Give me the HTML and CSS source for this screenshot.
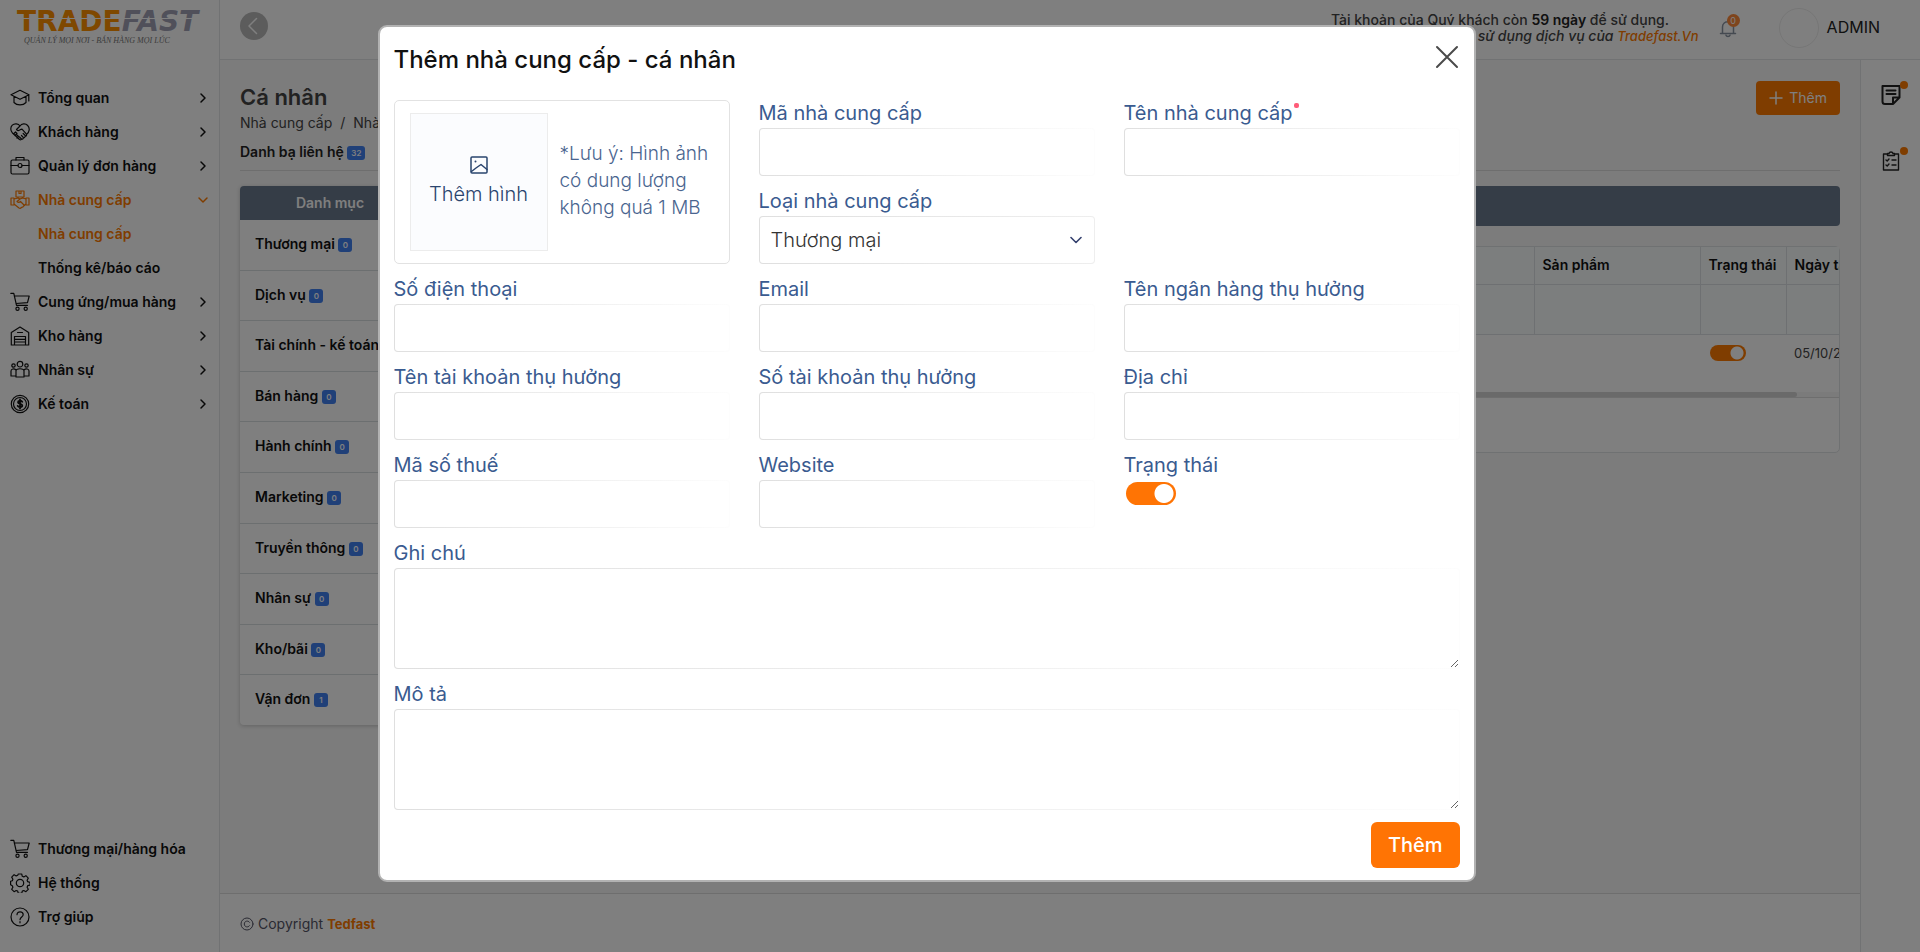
FILE: index.html
```html
<!DOCTYPE html>
<html lang="vi">
<head>
<meta charset="utf-8">
<title>Tradefast</title>
<link rel="stylesheet" href="styles.css">
</head>
<body>
<svg class="sprite" aria-hidden="true">
  <symbol id="chev" viewBox="0 0 12 12"><path d="M4 2 8 6 4 10"/></symbol>
  <symbol id="cart" viewBox="0 0 20 20"><path d="M.8 1.3h3l2.7 12h11M4.3 4h14.9l-1.700 6.700L6 11.500"/><circle cx="7.500" cy="16.800" r="1.600"/><circle cx="15.700" cy="16.800" r="1.600"/></symbol>
</svg>
<div class="app">
  <aside class="sidebar">
    <a class="logo" href="#"><span class="logo-word"><span class="logo-a">TRADE</span><span class="logo-b">FAST</span></span><span class="tagline">QUẢN LÝ MỌI NƠI - BÁN HÀNG MỌI LÚC</span></a>
    <nav class="menu">
      <a href="#"><svg class="ico" viewBox="0 0 20 20"><path d="M10 2.3 1 6.8l9 4.5 9-4.5zM4 8.5v6c3 3.2 9 3.2 12 0v-6M18.8 7v6"/></svg>Tổng quan<svg class="chev"><use href="#chev"/></svg></a>
      <a href="#"><svg class="ico" viewBox="0 0 20 20"><path d="M10 4C8.500 1.500 4.500 1 2.300 3.200 0 5.500.600 9 2.500 11l7 6.500c1 .7 1.700.2 2-.5 1 .3 1.800-.2 1.900-1.200 1 .1 1.700-.6 1.700-1.500 1 0 1.600-.8 1.400-1.700 3-2.600 3.700-6.400 1.200-9.100C15.500 1 11.500 1.500 10 4L6.500 7.500c.7 1.500 2.500 1.500 3.800.2l1.700-.5 4.500 5M11.500 13.500l2 2.200M9.500 15l2 2M13.200 11.500l2 2M3.500 12l2-2 1.500 1.500-2 2M7 13l1.500 1.500L7 16"/></svg>Khách hàng<svg class="chev"><use href="#chev"/></svg></a>
      <a href="#"><svg class="ico" viewBox="0 0 20 20"><rect x="1" y="4" width="18" height="14" rx="1.500"/><path d="M6 4V1.500h8V4M1 9.500h7M12 9.500h7"/><circle cx="10" cy="9.500" r="2"/></svg>Quản lý đơn hàng<svg class="chev"><use href="#chev"/></svg></a>
      <a class="active" href="#"><svg class="ico" viewBox="0 0 20 20"><path d="M6 1h8v6H6zM9 1v2.500h2V1M1 8h3v7H1zM16 8h3v7h-3zM4 9l4-1 2 1 2.500-1L16 9M4 14l5 4c1 .6 2 0 2.500-.7 1.500 0 2-.8 2.200-1.500L16 14M10 9l-3 2.500c1 1 2.500.8 3.500 0l4 4"/></svg>Nhà cung cấp<svg class="chev down"><use href="#chev"/></svg></a>
      <a class="sub active" href="#">Nhà cung cấp</a>
      <a class="sub" href="#">Thống kê/báo cáo</a>
      <a href="#"><svg class="ico"><use href="#cart"/></svg>Cung ứng/mua hàng<svg class="chev"><use href="#chev"/></svg></a>
      <a href="#"><svg class="ico" viewBox="0 0 20 20"><path d="M1.300 19V6.500L10 1l8.700 5.500V19h-3.200v-8.500h-11V19zM7.500 6.500h5M4.500 13.300h11M4.500 16h11M4.500 19h11"/></svg>Kho hàng<svg class="chev"><use href="#chev"/></svg></a>
      <a href="#"><svg class="ico" viewBox="0 0 20 20"><circle cx="10" cy="4.200" r="2.800"/><circle cx="3.500" cy="5.500" r="1.700"/><circle cx="16.500" cy="5.500" r="1.700"/><path d="M6 17v-6c0-3 8-3 8 0v6zM6 16H1v-5c0-2 3-3 5-1M14 16h5v-5c0-2-3-3-5-1"/></svg>Nhân sự<svg class="chev"><use href="#chev"/></svg></a>
      <a href="#"><svg class="ico" viewBox="0 0 20 20"><circle cx="10" cy="10" r="8.700"/><circle cx="10" cy="10" r="6.500"/><path class="bold" d="M12.300 7.800c-.8-1.500-4.300-1.400-4.300.4 0 2 4.300 1.300 4.300 3.400 0 2-3.800 2-4.600.3M10 5.500v9"/></svg>Kế toán<svg class="chev"><use href="#chev"/></svg></a>
    </nav>
    <nav class="menu menu-end">
      <a href="#"><svg class="ico"><use href="#cart"/></svg>Thương mại/hàng hóa</a>
      <a href="#"><svg class="ico" viewBox="0 0 20 20"><circle cx="10" cy="10" r="3.700"/><path d="M8.300 1h3.400l.6 2.300 1.500.6 2.100-1.200 2.400 2.400-1.200 2.100.6 1.500 2.300.6v1.400l0 1.400-2.300.6-.6 1.500 1.200 2.100-2.400 2.400-2.100-1.200-1.500.6-.6 2.300H8.300l-.6-2.300-1.500-.6-2.100 1.200-2.400-2.400 1.200-2.100-.6-1.500L.6 11.700V8.300l1.700-.6.6-1.500-1.200-2.100 2.400-2.400 2.100 1.200 1.500-.6z"/></svg>Hệ thống</a>
      <a href="#"><svg class="ico" viewBox="0 0 20 20"><circle cx="10" cy="10" r="9"/><path d="M7 7.700c0-4 6.200-3.700 6.200 0 0 2.300-3.200 2.200-3.200 5M10 14.500v1.300"/></svg>Trợ giúp</a>
    </nav>
  </aside>

  <div class="page">
    <header class="topbar">
      <button class="back" aria-label="Thu gọn"><svg viewBox="0 0 28 28"><path d="M16.500 6.500 9 14l7.500 7.500"/></svg></button>
      <p class="notice">Tài khoản của Quý khách còn <b>59 ngày</b> để sử dụng.<br><i>Xin cảm ơn Quý khách đã sử dụng dịch vụ của <a href="#">Tradefast.Vn</a></i></p>
      <button class="bell" aria-label="Thông báo"><svg viewBox="0 0 18 20"><path d="M1.500 15.500h15M3.500 15.500V9c0-7 11-7 11 0v6.500M7 17.300c.5 1.600 3.500 1.600 4 0M9 3.700V2"/></svg><span>0</span></button>
      <span class="avatar"></span>
      <span class="user">ADMIN</span>
    </header>

    <div class="middle">
      <div class="column">
        <main class="content">
          <div class="heading">
            <div>
              <h1>Cá nhân</h1>
              <nav class="crumbs"><a href="#">Nhà cung cấp</a><span>/</span><a href="#">Nhà cung cấp</a></nav>
            </div>
            <button class="add"><svg viewBox="0 0 14 14"><path d="M7 1v12M1 7h12"/></svg>Thêm</button>
          </div>
          <a class="contacts" href="#">Danh bạ liên hệ <span class="count">32</span></a>
          <div class="panels">
            <section class="cats">
              <h2>Danh mục</h2>
              <ul>
                <li>Thương mại <span class="count">0</span></li>
                <li>Dịch vụ <span class="count">0</span></li>
                <li>Tài chính - kế toán</li>
                <li>Bán hàng <span class="count">0</span></li>
                <li>Hành chính <span class="count">0</span></li>
                <li>Marketing <span class="count">0</span></li>
                <li>Truyền thông <span class="count">0</span></li>
                <li>Nhân sự <span class="count">0</span></li>
                <li>Kho/bãi <span class="count">0</span></li>
                <li>Vận đơn <span class="count">1</span></li>
              </ul>
            </section>
            <section class="listing">
              <div class="bar"></div>
              <div class="card">
                <div class="scroller">
                  <table>
                    <colgroup><col class="c-rest"><col class="c-prod"><col class="c-state"><col class="c-date"></colgroup>
                    <thead>
                      <tr><th></th><th>Sản phẩm</th><th>Trạng thái</th><th>Ngày tạo</th></tr>
                      <tr class="filters"><td></td><td></td><td></td><td></td></tr>
                    </thead>
                    <tbody>
                      <tr><td></td><td></td><td><input class="switch small" type="checkbox" checked aria-label="Trạng thái"></td><td class="date">05/10/2024</td></tr>
                    </tbody>
                  </table>
                </div>
                <div class="track"><div class="thumb"></div></div>
              </div>
            </section>
          </div>
        </main>
        <footer class="foot"><svg viewBox="0 0 14 14"><circle cx="7" cy="7" r="6"/><path d="M9.500 5.300C8 3 4.300 4 4.300 7s3.700 4 5.200 1.700"/></svg>Copyright <a href="#">Tedfast</a></footer>
      </div>
      <aside class="rail">
        <button aria-label="Ghi chú"><svg viewBox="0 0 20 20"><path d="M1.500 1h17v11.500L12 19H4c-1.500 0-2.500-1-2.500-2.500zM5.500 5.500h9M5.500 9h9M18.500 12.500H12V19"/></svg><span class="dot"></span></button>
        <button aria-label="Công việc"><svg viewBox="0 0 20 20"><path class="thin" d="M6.500 3H2.500v16h15V3h-4M6.500 4.500h7V2.500H12c-.5-2-3.500-2-4 0H6.500zM5 9l1.200 1L8 8M5 14l1.200 1L8 13M11 9h4M11 14h4"/></svg><span class="dot"></span></button>
      </aside>
    </div>
  </div>
</div>

<div class="overlay">
  <form class="modal" role="dialog" aria-labelledby="title">
    <div class="modal-head">
      <h2 id="title">Thêm nhà cung cấp - cá nhân</h2>
      <button type="button" class="close" aria-label="Đóng"><svg viewBox="0 0 24 24"><path d="M2 2l20 20M22 2 2 22"/></svg></button>
    </div>
    <div class="fields">
      <div class="photo">
        <button type="button" class="upload"><svg viewBox="0 0 18 18"><rect x="1" y="1" width="16" height="16" rx="1"/><path d="M1.500 15.500 6 12l5-3.500 6 5"/><circle class="fill" cx="5.500" cy="5.500" r="1"/></svg>Thêm hình</button>
        <p>*Lưu ý: Hình ảnh có dung lượng không quá 1 MB</p>
      </div>
      <div class="field"><label for="code">Mã nhà cung cấp</label><input id="code" type="text"></div>
      <div class="field"><label for="name">Tên nhà cung cấp<span class="req"></span></label><input id="name" type="text"></div>
      <div class="field"><label for="kind">Loại nhà cung cấp</label><div class="select"><select id="kind"><option>Thương mại</option></select><svg viewBox="0 0 12 12"><path d="M1 3.500 6 8.500l5-5"/></svg></div></div>
      <div class="field phone"><label for="phone">Số điện thoại</label><input id="phone" type="text"></div>
      <div class="field"><label for="email">Email</label><input id="email" type="text"></div>
      <div class="field"><label for="bank">Tên ngân hàng thụ hưởng</label><input id="bank" type="text"></div>
      <div class="field"><label for="holder">Tên tài khoản thụ hưởng</label><input id="holder" type="text"></div>
      <div class="field"><label for="account">Số tài khoản thụ hưởng</label><input id="account" type="text"></div>
      <div class="field"><label for="address">Địa chỉ</label><input id="address" type="text"></div>
      <div class="field"><label for="tax">Mã số thuế</label><input id="tax" type="text"></div>
      <div class="field"><label for="web">Website</label><input id="web" type="text"></div>
      <div class="field"><label for="state">Trạng thái</label><input id="state" class="switch" type="checkbox" checked></div>
      <div class="field wide"><label for="note">Ghi chú</label><textarea id="note"></textarea></div>
      <div class="field wide"><label for="desc">Mô tả</label><textarea id="desc"></textarea></div>
    </div>
    <div class="modal-foot"><button type="submit">Thêm</button></div>
  </form>
</div>
</body>
</html>
```

FILE: styles.css
```css
* { box-sizing: border-box; }
body {
  margin: 0;
  font: 14px/20px Inter, "Noto Sans", sans-serif;
  color: #222;
  background: #fff;
  overflow: hidden;
}
h1, h2, p, ul { margin: 0; padding: 0; font-weight: 500; }
ul { list-style: none; }
a { color: inherit; text-decoration: none; }
button { font: inherit; border: 0; padding: 0; background: none; color: inherit; cursor: pointer; }
svg { fill: none; stroke: currentColor; stroke-linecap: round; stroke-linejoin: round; flex: none; }
.sprite { display: none; }

.app { display: flex; min-height: 100vh; }
.sidebar {
  width: 220px;
  flex: none;
  display: flex;
  flex-direction: column;
  padding: 8px 0 18px;
  border-right: 1px solid #e3e5e6;
  background: #fff;
}
.logo { display: block; padding-left: 17px; height: 73px; }
.logo-word {
  position: relative;
  display: block;
  font: bold 28px/28px "DejaVu Sans", sans-serif;
}
.logo-word::after {
  content: "";
  position: absolute;
  left: 0;
  right: 0;
  top: 10px;
  height: 1px;
  background: #fff;
}
.logo-a { color: #ff9000; }
.logo-b { color: #a0a0b4; font-style: italic; }
.tagline {
  display: block;
  padding-left: 7px;
  font: italic 8px/10px "Liberation Serif", serif;
  color: #777;
}
.menu { display: flex; flex-direction: column; }
.menu-end { margin-top: auto; }
.menu a {
  display: flex;
  align-items: center;
  gap: 8px;
  height: 34px;
  padding: 0 10px;
  font-weight: 600;
  color: #111;
  white-space: nowrap;
}
.menu .sub { padding-left: 38px; }
.menu .active, .notice a, .foot a { color: #ff7a00; }
.ico { width: 20px; height: 20px; stroke-width: 1.2; }
.bold { stroke-width: 1.8; }
.chev { width: 12px; height: 12px; margin-left: auto; stroke-width: 1.5; }
.down { transform: rotate(90deg); }

.page { flex: 1; min-width: 0; display: flex; flex-direction: column; }
.topbar {
  display: flex;
  align-items: flex-start;
  height: 60px;
  padding: 0 40px 0 20px;
  border-bottom: 1px solid #e3e5e6;
  background: #fff;
}
.back { width: 28px; height: 28px; margin: 12px auto 0 0; border-radius: 50%; background: #b8b8b8; color: #fff; }
.back svg { display: block; stroke-width: 1.5; }
.notice { padding: 12px 20px 0 0; line-height: 16px; text-align: center; color: #444; }
.notice a { font-size: 13px; }
.notice b { font-weight: 600; color: #222; }
.bell { position: relative; width: 18px; height: 20px; margin-top: 18px; color: #8a94a3; }
.bell svg { display: block; stroke-width: 1.5; }
.bell span {
  position: absolute;
  left: 8px;
  top: -4px;
  width: 13px;
  height: 13px;
  border-radius: 50%;
  background: #ff8a3a;
  color: #fff;
  font-size: 9px;
  line-height: 13px;
}
.avatar { width: 40px; height: 40px; margin: 8px 8px 0 42px; border: 1px solid #ececec; border-radius: 50%; }
.user { padding-top: 17px; font-size: 16px; color: #222; }

.middle { flex: 1; display: flex; min-width: 0; }
.column { flex: 1; min-width: 0; display: flex; flex-direction: column; background: #f8f8f8; }
.content { flex: 1; padding: 21px 20px 0; }
.heading { display: flex; justify-content: space-between; align-items: flex-start; }
h1 { font-size: 22px; font-weight: 600; line-height: 32px; color: #444; }
.crumbs { display: flex; gap: 8px; color: #444; }
.add {
  display: flex;
  align-items: center;
  gap: 6px;
  height: 34px;
  padding: 0 13px;
  border-radius: 4px;
  background: #ff7a00;
  color: #fff;
}
.add svg { width: 14px; height: 14px; stroke-width: 1.5; }
.contacts { display: block; padding: 9px 0 8px; border-bottom: 1px solid #dcdcdc; font-weight: 600; }
.count {
  display: inline-block;
  min-width: 14px;
  height: 14px;
  padding: 0 4px;
  border-radius: 3px;
  background: #4080f0;
  color: #fff;
  font-size: 8px;
  line-height: 14px;
  font-weight: 600;
  text-align: center;
  vertical-align: 1px;
}
.panels { display: grid; grid-template-columns: 180px minmax(0, 1fr); gap: 20px; margin-top: 15px; align-items: start; }
.cats { border-radius: 4px; background: #fff; box-shadow: 0 1px 4px #0003; overflow: hidden; }
.cats h2 { background: #6a7a8e; color: #fff; font-size: 14px; font-weight: 600; line-height: 34px; text-align: center; }
.cats li { padding: 14px 15px 16px; line-height: 1.4; border-bottom: 1px solid #d9dee0; font-weight: 600; color: #111; white-space: nowrap; }
.cats li:last-child { border-bottom: 0; }
.bar { height: 40px; border-radius: 4px; background: #6a7a8e; }
.card { margin-top: 20px; padding-bottom: 54px; border: 1px solid #dfe2e4; border-radius: 5px; background: #fff; }
.scroller { overflow: hidden; }
table { width: 1519px; table-layout: fixed; border-collapse: collapse; }
.c-rest { width: 1093px; }
.c-prod { width: 166px; }
.c-state { width: 86px; }
.c-date { width: 174px; }
th, td { padding: 0 8px; text-align: left; white-space: nowrap; }
thead th, thead td { border-right: 1px solid #dde1e4; border-bottom: 1px solid #dde1e4; background: #f9fdfd; }
th { height: 37px; font-weight: 600; color: #111; }
.filters td { height: 50px; }
tbody td { height: 58px; padding-top: 10px; vertical-align: top; }
.date { font-size: 13px; line-height: 16px; color: #444; }
.track { height: 6px; background: #f6f6f6; border-bottom: 1px solid #dcdcdc; }
.thumb { width: 97%; height: 5px; border-radius: 3px; background: #d4d4d4; }
.foot {
  display: flex;
  align-items: center;
  gap: 4px;
  height: 59px;
  padding: 2px 20px 0;
  border-top: 1px solid #dcdcdc;
  background: #fff;
  color: #556;
}
.foot svg { width: 14px; height: 14px; }
.foot a { font-size: 13px; font-weight: 700; }
.rail { width: 60px; flex: none; display: flex; flex-direction: column; align-items: center; gap: 46px; padding-top: 25px; border-left: 1px solid #e3e5e6; background: #fff; }
.rail button { position: relative; width: 20px; height: 20px; color: #222; }
.rail svg { display: block; width: 20px; height: 20px; stroke-width: 2; }
.rail .thin { stroke-width: 1.4; }
.dot { position: absolute; right: -7px; top: -4px; width: 8px; height: 8px; border-radius: 50%; background: #ff7a00; }

.switch {
  appearance: none;
  display: block;
  width: 50px;
  height: 23px;
  margin: 2px 0 0 2px;
  border-radius: 12px;
  background: radial-gradient(circle at 38px 50%, #fff 9px, #ff7404 10px);
}
.small {
  width: 36px;
  height: 16px;
  margin-top: 0;
  background: radial-gradient(circle at 27px 50%, #fff 6px, #ff7a00 7px);
}

.overlay {
  position: fixed;
  inset: 0;
  display: flex;
  justify-content: center;
  align-items: flex-start;
  padding: 25px 67px 0 0;
  background: rgba(0, 0, 0, .5);
}
.modal {
  width: 100%;
  max-width: 1098px;
  padding: 0 14px 12px;
  border: 2px solid #b2b2b2;
  border-radius: 9px;
  background: #fff;
}
.modal-head { display: flex; justify-content: space-between; align-items: center; height: 64px; margin-bottom: 9px; padding-top: 2px; }
.modal-head h2 { font-size: 24px; color: #111; }
.close { width: 24px; height: 24px; margin: 0 1px 6px 0; color: #4a4a4a; }
.close svg { display: block; stroke-width: 2; }
.fields { display: grid; grid-template-columns: repeat(3, minmax(0, 1fr)); gap: 12px 29px; }
.photo {
  grid-row: span 2;
  display: flex;
  align-items: center;
  gap: 12px;
  padding: 0 10px 0 15px;
  border: 1px solid #e2e2e2;
  border-radius: 5px;
  font-size: 19px;
  color: #4a658f;
}
.photo p { padding-bottom: 4px; font-weight: 300; line-height: 27px; }
.upload {
  display: flex;
  flex-direction: column;
  align-items: center;
  justify-content: center;
  gap: 6px;
  width: 138px;
  height: 138px;
  flex: none;
  border: 1px solid #ececec;
  background: #fbfcfe;
  color: #2a446e;
  font-size: 20px;
  line-height: 28px;
  font-weight: 300;
}
.upload svg { width: 18px; height: 18px; stroke-width: 1.5; }
.fill { fill: currentColor; stroke: none; }
.phone { grid-column: 1; }
.wide { grid-column: 1 / -1; }
.field label { display: block; padding-bottom: 2px; font-size: 20px; line-height: 26px; color: #3a5b90; }
.req { display: inline-block; width: 5px; height: 5px; margin-left: 1px; border-radius: 2px; background: #ff5c78; vertical-align: 12px; }
.field input[type="text"], .field select, .field textarea {
  display: block;
  width: 100%;
  height: 48px;
  margin: 0;
  padding: 0 11px;
  border: 1px solid transparent;
  border-radius: 4px;
  outline: 0;
  background: linear-gradient(#fff, #fff) padding-box, linear-gradient(to right, #dfdfdf, #fdfdfd) border-box;
  font: 300 20px Inter, "Noto Sans", sans-serif;
  color: #333;
}
.field textarea { height: 101px; padding: 10px; resize: vertical; }
.select { position: relative; }
.field select { appearance: none; background: linear-gradient(#fff, #fff) padding-box, linear-gradient(to right, #dfdfdf, #eee) border-box; }
.select svg { position: absolute; right: 13px; top: 18px; width: 12px; height: 12px; stroke-width: 1.6; color: #34406e; pointer-events: none; }
.modal-foot { display: flex; justify-content: flex-end; margin-top: 12px; }
.modal-foot button { height: 46px; padding: 0 17px; border-radius: 6px; background: #ff7404; color: #fff; font-size: 20px; font-weight: 500; }
```
